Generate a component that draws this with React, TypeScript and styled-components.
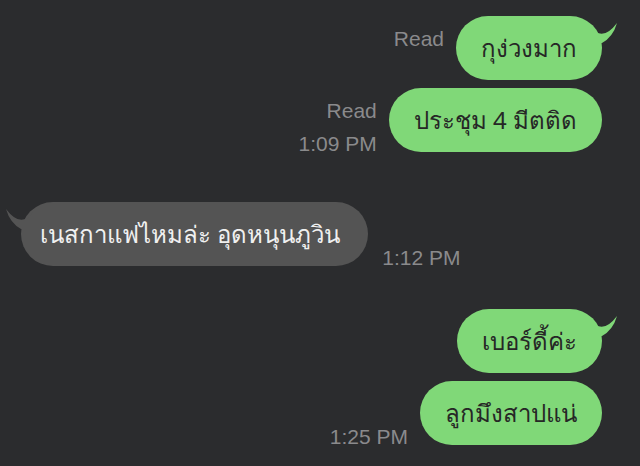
import { createGlobalStyle, styled } from "styled-components";

const GlobalStyle = createGlobalStyle`
    html, body {
        margin: 0;
        background: #2b2c2e;
    }
`;

type Message = {
    text: string;
    mine: boolean;
    read?: boolean;
    time?: string;
    // keeps the empty time line so "Read" stays on the same level as grouped rows
    timeSlot?: boolean;
    tail?: boolean;
    gap: number;
};

const messages: Message[] = [
    { text: "กุง่วงมาก", mine: true, read: true, timeSlot: true, tail: true, gap: 0 },
    { text: "ประชุม 4 มีตติด", mine: true, read: true, time: "1:09 PM", gap: 8 },
    { text: "เนสกาแฟไหมล่ะ อุดหนุนภูวิน", mine: false, time: "1:12 PM", tail: true, gap: 50 },
    { text: "เบอร์ดี้ค่ะ", mine: true, tail: true, gap: 43 },
    { text: "ลูกมึงสาปแน่", mine: true, time: "1:25 PM", gap: 8 },
];

const GREEN = "#80d878";
const GREY = "#545454";

const Chat = styled.div`
    display: flex;
    flex-direction: column;
    padding: 16px 38px 0 21px;
    min-height: 466px;
    box-sizing: border-box;
`;

const Row = styled.div<{ $mine: boolean; $gap: number }>`
    display: flex;
    flex-direction: ${(p) => (p.$mine ? "row-reverse" : "row")};
    align-items: flex-end;
    gap: ${(p) => (p.$mine ? 12 : 14)}px;
    margin-top: ${(p) => p.$gap}px;
`;

const Bubble = styled.div<{ $mine: boolean }>`
    position: relative;
    display: flex;
    align-items: center;
    height: 64px;
    padding: ${(p) => (p.$mine ? "0 25px" : "0 28px 0 19px")};
    border-radius: 32px;
    background: ${(p) => (p.$mine ? GREEN : GREY)};
    color: ${(p) => (p.$mine ? "#262726" : "#f0f0f0")};
    font-family: "Noto Sans", sans-serif;
    font-size: 24px;
    white-space: nowrap;
`;

const Tail = styled.svg<{ $mine: boolean }>`
    position: absolute;
    top: 0;
    width: 28px;
    height: 30px;
    ${(p) => (p.$mine ? "right: -16px;" : "left: -16px; transform: scaleX(-1);")}
`;

const Meta = styled.div`
    display: flex;
    flex-direction: column;
    align-items: flex-end;
    gap: 12px;
    margin-bottom: -2px;
    font-family: "Liberation Sans", Arial, sans-serif;
    font-size: 21px;
    line-height: 21px;
    color: #8a8a8c;
`;

const Line = styled.span`
    height: 21px;
`;

function BubbleTail({ mine }: { mine: boolean }) {
    // drawn from the bubble's top corner, 12px inside it, out to the tip
    return (
        <Tail $mine={mine} viewBox="-12 0 28 30">
            <path d="M -12 10 Q 0 27 15 7 Q 11 21 0 27 L -12 27 Z" fill={mine ? GREEN : GREY} />
        </Tail>
    );
}

export default function App() {
    return (
        <Chat>
            <GlobalStyle />
            {messages.map((m, i) => (
                <Row key={i} $mine={m.mine} $gap={m.gap}>
                    <Bubble $mine={m.mine}>
                        {m.tail && <BubbleTail mine={m.mine} />}
                        {m.text}
                    </Bubble>
                    {(m.read || m.time) && (
                        <Meta>
                            {m.read && <Line>Read</Line>}
                            {m.time ? <Line>{m.time}</Line> : m.timeSlot && <Line />}
                        </Meta>
                    )}
                </Row>
            ))}
        </Chat>
    );
}
